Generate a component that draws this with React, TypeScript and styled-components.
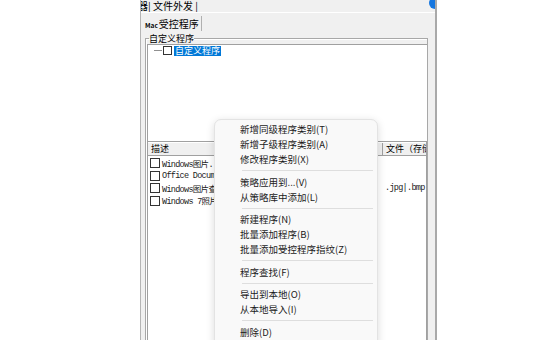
import styled, { createGlobalStyle } from "styled-components";

const GlobalStyle = createGlobalStyle`
  html, body {
    margin: 0;
    padding: 0;
    background: #fff;
  }
  body {
    font-family: "Noto Sans CJK SC", "Noto Sans", sans-serif;
  }
`

const Page = styled.div`
  position: relative;
  display: flex;
  height: 340px;
  overflow: hidden;
  background: #fff;
`

const LeftBlank = styled.div`
  width: 140px;
  flex-shrink: 0;
`

const Dialog = styled.div`
  position: relative;
  width: 294px;
  flex-shrink: 0;
  display: flex;
  flex-direction: column;
  overflow: hidden;
  background: #f0f0f0;
  border-left: 1px solid #b4b4b4;
  border-right: 2px solid #a9a9a9;
  font-family: "Noto Sans CJK SC", sans-serif;
  color: #000;
`

const TopTabs = styled.div`
  height: 12px;
  line-height: 12px;
  font-size: 10px;
  white-space: nowrap;
  overflow: hidden;
  border-bottom: 1px solid #fff;
  span {
    margin-left: -3px;
  }
`

const SubTabs = styled.div`
  display: flex;
  height: 20px;
  align-items: center;
`

const SubTab = styled.div`
  display: flex;
  align-items: baseline;
  height: 15px;
  line-height: 15px;
  padding: 0 2px 0 4px;
  font-size: 10px;
  border-right: 1px solid #b0b0b0;
  small {
    font-size: 6.5px;
    font-weight: bold;
    margin-right: 1px;
  }
`

const Group = styled.fieldset`
  flex: 1;
  display: flex;
  flex-direction: column;
  margin: 0 7px 0 4px;
  padding: 0 0 0 1px;
  min-width: 0;
  border: 1px solid #a8a8a8;
  border-bottom: none;
  box-shadow: inset 1px 1px 0 #fff;
`

const GroupLabel = styled.legend`
  font-size: 9px;
  line-height: 11px;
  padding: 0;
  margin-left: 2px;
`

const Tree = styled.div`
  height: 96px;
  background: #fff;
  border-top: 1px solid #a0a0a0;
  border-left: 1px solid #a0a0a0;
  padding: 0 0 0 6px;
`

const TreeItem = styled.div`
  display: flex;
  align-items: center;
  height: 11px;
  gap: 1px;
`

const TreeLine = styled.div`
  width: 8px;
  border-top: 1px solid #909090;
`

const Check = styled.div<{ $size?: number }>`
  width: ${(p) => p.$size ?? 7}px;
  height: ${(p) => p.$size ?? 7}px;
  border: 1px solid #333;
  background: #fff;
  flex-shrink: 0;
`

const Selected = styled.span`
  background: #0078d7;
  color: #fff;
  font-size: 9px;
  line-height: 10px;
  padding: 0 1px;
  margin-left: 1px;
`

const List = styled.div`
  flex: 1;
  background: #fff;
  border: 1px solid #a0a0a0;
  border-bottom: none;
  overflow: hidden;
`

const HeaderRow = styled.div`
  display: grid;
  grid-template-columns: 150px 85px 1fr;
  height: 12px;
  background: #f0f0f0;
  border-bottom: 1px solid #a0a0a0;
  margin-top: 1px;
  margin-bottom: 1px;
`

const HeaderCell = styled.div`
  font-size: 9px;
  line-height: 12px;
  padding-left: 3px;
  white-space: nowrap;
  overflow: hidden;
  border-right: 1px solid #a0a0a0;
  &:last-child {
    border-right: none;
  }
`

const Row = styled.div`
  display: grid;
  grid-template-columns: 150px 85px 1fr;
  height: 12.5px;
  align-items: center;
`

const Cell = styled.div`
  display: flex;
  align-items: center;
  gap: 2px;
  padding-left: 2px;
  font-family: "Liberation Mono", "Noto Sans CJK SC", monospace;
  font-size: 8.5px;
  letter-spacing: -0.7px;
  white-space: nowrap;
  overflow: hidden;
  color: #222;
`

const Badge = styled.div`
  position: absolute;
  top: -3px;
  right: -6px;
  width: 12px;
  height: 12px;
  border-radius: 50%;
  background: #1677e0;
`

const Menu = styled.div`
  position: absolute;
  left: 214px;
  top: 119px;
  width: 162px;
  padding: 2px 0 8px;
  background: #f9f9f9;
  border: 1px solid #e3e3e3;
  border-radius: 7px;
  box-shadow: 0 2px 8px rgba(0, 0, 0, 0.14);
`

const MenuItem = styled.div`
  height: 15px;
  line-height: 15px;
  padding-left: 25px;
  font-size: 9.5px;
  color: #1b1b1b;
  white-space: nowrap;
`

const Separator = styled.div`
  height: 7.5px;
  display: flex;
  align-items: center;
  padding: 0 4px 0 27px;
  &::after {
    content: "";
    flex: 1;
    border-top: 1px solid #dedede;
  }
`

const rows = [
  { name: "Windows图片...", ext: "" },
  { name: "Office Documents", ext: "" },
  { name: "Windows图片查看器", ext: ".jpg|.bmp" },
  { name: "Windows 7照片", ext: "" },
]

const menu = [
  ["新增同级程序类别(T)", "新增子级程序类别(A)", "修改程序类别(X)"],
  ["策略应用到...(V)", "从策略库中添加(L)"],
  ["新建程序(N)", "批量添加程序(B)", "批量添加受控程序指纹(Z)"],
  ["程序查找(F)"],
  ["导出到本地(O)", "从本地导入(I)"],
  ["删除(D)"],
]

export default function App() {
  return (
    <Page>
      <GlobalStyle />
      <LeftBlank />
      <Dialog>
        <Badge />
        <TopTabs><span>器| 文件外发 |</span></TopTabs>
        <SubTabs>
          <SubTab><small>Mac</small>受控程序</SubTab>
        </SubTabs>
        <Group>
          <GroupLabel>自定义程序</GroupLabel>
          <Tree>
            <TreeItem>
              <TreeLine />
              <Check />
              <Selected>自定义程序</Selected>
            </TreeItem>
          </Tree>
          <List>
            <HeaderRow>
              <HeaderCell>描述</HeaderCell>
              <HeaderCell />
              <HeaderCell>文件（存储</HeaderCell>
            </HeaderRow>
            {rows.map((r) => (
              <Row key={r.name}>
                <Cell><Check $size={8} />{r.name}</Cell>
                <Cell />
                <Cell>{r.ext}</Cell>
              </Row>
            ))}
          </List>
        </Group>
      </Dialog>
      <Menu>
        {menu.map((group, i) => (
          <div key={i}>
            {i > 0 && <Separator />}
            {group.map((label) => (
              <MenuItem key={label}>{label}</MenuItem>
            ))}
          </div>
        ))}
      </Menu>
    </Page>
  )
}
